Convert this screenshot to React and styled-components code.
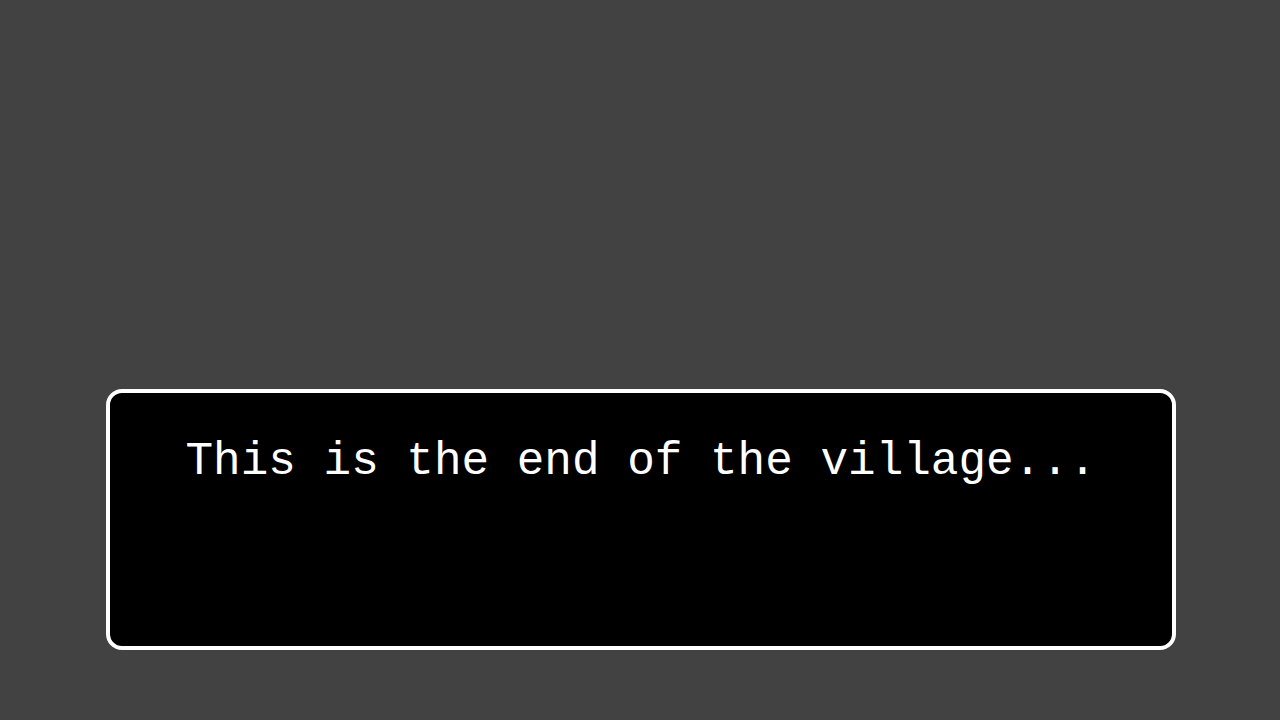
import React from 'react';
import styled, { createGlobalStyle } from 'styled-components';

const GlobalStyle = createGlobalStyle`
    html, body {
        margin: 0;
        padding: 0;
        background: #424242;
    }
`;

const Stage = styled.main`
    width: 1280px;
    height: 720px;
    display: flex;
    flex-direction: column;
    justify-content: flex-end;
    align-items: center;
    padding: 0 0 70px 2px;
    box-sizing: border-box;
    background: #424242;
`;

const DialogBox = styled.section`
    width: 1070px;
    height: 261px;
    box-sizing: border-box;
    background: #000;
    border: 4px solid #fff;
    border-radius: 16px;
    padding-top: 42px;
`;

const Line = styled.p`
    margin: 0;
    text-align: center;
    color: #fff;
    font-family: "Liberation Mono", "DejaVu Sans Mono", monospace;
    font-size: 46px;
    line-height: 1.2;
    white-space: pre;
`;

const App = () => {
    return (
        <>
            <GlobalStyle />
            <Stage>
                <DialogBox>
                    <Line>This is the end of the village...</Line>
                </DialogBox>
            </Stage>
        </>
    );
};

export default App;
